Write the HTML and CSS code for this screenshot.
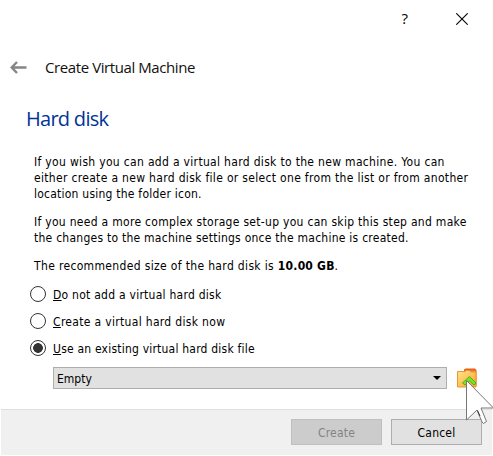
FILE: index.html
```html
<!DOCTYPE html>
<html lang="en">
<head>
<meta charset="utf-8">
<title>Create Virtual Machine</title>
<link rel="stylesheet" href="styles.css">
</head>
<body>
<main class="dialog">
  <div class="titlebar">
    <span class="help">?</span>
    <svg class="close" width="12" height="12" viewBox="0 0 12 12"><path d="M.3 .3 11.7 11.7M11.7 .3 .3 11.7"/></svg>
  </div>
  <header class="header">
    <svg class="back" width="17" height="13" viewBox="0 0 17 13"><path d="M16.5 6.500H2M7 1 1.700 6.500 7 12"/></svg>
    <span class="title">Create Virtual Machine</span>
  </header>
  <h1 class="heading">Hard disk</h1>
  <section class="content">
    <p class="para"><span class="line l1">If you wish you can add a virtual hard disk to the new machine. You can</span>
    <span class="line l2">either create a new hard disk file or select one from the list or from another</span>
    <span class="line l3">location using the folder icon.</span></p>
    <p class="para"><span class="line l4">If you need a more complex storage set-up you can skip this step and make</span>
    <span class="line l5">the changes to the machine settings once the machine is created.</span></p>
    <p class="para"><span class="line l6">The recommended size of the hard disk is <b>10.00 GB</b>.</span></p>
  </section>
  <section class="options">
    <div class="option"><i class="radio"></i><span class="o1"><u>D</u>o not add a virtual hard disk</span></div>
    <div class="option"><i class="radio"></i><span class="o2"><u>C</u>reate a virtual hard disk now</span></div>
    <div class="option"><i class="radio checked"></i><span class="o3"><u>U</u>se an existing virtual hard disk file</span></div>
  </section>
  <div class="picker">
    <div class="combo"><span>Empty</span><i class="caret"></i></div>
    <svg class="folder" width="22" height="22" viewBox="0 0 22 22">
      <defs><linearGradient id="f" x1="0" y1="0" x2="1" y2="1"><stop offset="0" stop-color="#ffe58a"/><stop offset="1" stop-color="#f9a52b"/></linearGradient></defs>
      <path d="M8 4.500V2.500L9.500 1.500H19l1.500 1.500V19H8z" fill="#e8601c"/>
      <path d="M9 3.500h10.500v1.500H9z" fill="#f58a4b"/>
      <path d="M1.500 4.500H9l1.500-1h3L15 5h5v15H1.500z" fill="url(#f)" stroke="#e9962f" stroke-width="1"/>
      <path d="m6.500 16 7-6.500 6.500 6.500-2 2-4.500-4-4.500 4z" fill="#78e428" stroke="#4bb415" stroke-width="1"/>
    </svg>
  </div>
  <footer class="footer">
    <div class="button disabled">Create</div>
    <div class="button">Cancel</div>
  </footer>
  <svg class="cursor" width="28" height="46" viewBox="0 0 28 46">
    <path d="M1.500 1.500V41L12 31L17 43L18.500 44.500L21.500 42.500L16 29H28.500z" fill="#fff" stroke="#777"/>
    <path d="M12.500 31.500 15 37" fill="none" stroke="#333"/>
  </svg>
</main>
</body>
</html>
```
FILE: styles.css
```css
body {
  margin: 0;
  background: #fff;
  color: #000;
  font: 12px/16px "DejaVu Sans Condensed", "DejaVu Sans", sans-serif;
  font-stretch: condensed;
}
.dialog {
  position: relative;
  display: flex;
  flex-direction: column;
  width: 493px;
  height: 456px;
  overflow: hidden;
}
.titlebar {
  display: flex;
  justify-content: flex-end;
  align-items: center;
  gap: 48px;
  height: 38px;
  padding-right: 25px;
}
.help { padding-bottom: 2px; font: 15px/20px "Open Sans", sans-serif; }
.close path { fill: none; stroke: #000; stroke-width: 1.1; }
.header {
  display: flex;
  align-items: center;
  gap: 18px;
  height: 58px;
  padding-left: 10px;
}
.back path { fill: none; stroke: #858585; stroke-width: 2.4; }
.title { color: #111; font: 15px/20px "Open Sans", sans-serif; letter-spacing: -.41px; white-space: nowrap; }
.heading {
  margin: 9px 0 0 26px;
  color: #039;
  font: 20px/28px "Open Sans", sans-serif;
  letter-spacing: -.72px;
  white-space: nowrap;
}
.content { padding: 21px 0 0 34px; }
.para { margin: 0 0 12px; }
.line { display: block; white-space: nowrap; width: max-content; }
.l1, .l2 { letter-spacing: .32px; }
.l3 { letter-spacing: .23px; }
.l4 { letter-spacing: .295px; }
.l5 { letter-spacing: .25px; }
.l6 { letter-spacing: .345px; }
.l6 b { letter-spacing: .22px; }
.o1 { letter-spacing: .25px; }
.o2 { letter-spacing: .32px; }
.o3 { letter-spacing: .21px; }
.options {
  display: flex;
  flex-direction: column;
  gap: 11px;
  padding-left: 30px;
}
.option { display: flex; align-items: center; gap: 7px; height: 16px; white-space: nowrap; }
.option span { padding-top: 2px; }
.radio {
  box-sizing: border-box;
  width: 16px;
  height: 16px;
  border: 1px solid #333;
  border-radius: 50%;
}
.checked { background: radial-gradient(circle, #333 4.5px, #fff 5.2px); }
.picker { display: flex; align-items: center; gap: 9px; margin: 11px 0 0 53px; }
.combo {
  box-sizing: border-box;
  display: flex;
  justify-content: space-between;
  align-items: center;
  width: 394px;
  height: 22px;
  padding: 0 5px 0 3px;
  border: 1px solid #adadad;
  background: #e1e1e1;
}
.combo span { padding-top: 1px; }
.caret { border: 4px solid transparent; border-top-color: #000; border-bottom: 0; }
.footer {
  box-sizing: border-box;
  display: flex;
  justify-content: flex-end;
  gap: 9px;
  width: 491px;
  height: 46px;
  margin: auto 0 1px 1px;
  padding: 9px 10px 0 0;
  border-top: 1px solid #dfdfdf;
  background: #f0f0f0;
}
.button {
  box-sizing: border-box;
  width: 91px;
  height: 26px;
  border: 1px solid #adadad;
  background: #e1e1e1;
  line-height: 26px;
  text-align: center;
  letter-spacing: .2px;
}
.disabled { border-color: #bfbfbf; background: #ccc; color: #838383; }
.cursor { position: absolute; left: 465px; top: 379px; }
```
